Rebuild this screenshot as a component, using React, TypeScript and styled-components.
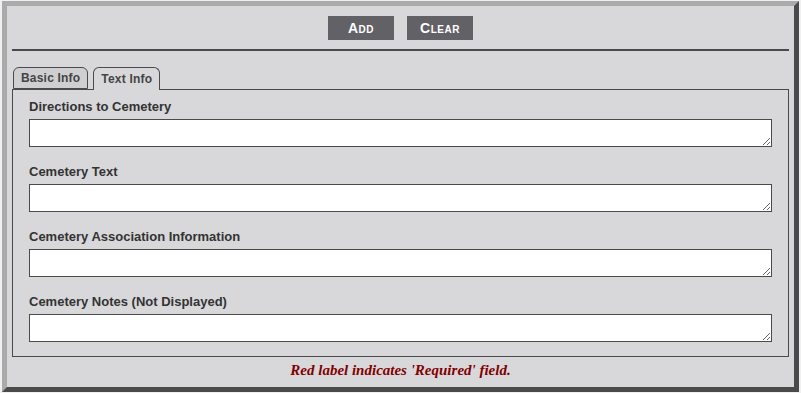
import styled, { createGlobalStyle } from "styled-components";

const GlobalStyle = createGlobalStyle`
  body {
    margin: 0;
    background: #f0f0f0;
    font-family: "Liberation Sans", Arial, sans-serif;
  }
`;

const Page = styled.div`
  padding: 1px 2px 0 2px;
`;

const Frame = styled.div`
  box-sizing: border-box;
  width: 797px;
  height: 391px;
  background: #d8d8da;
  border: 5px solid;
  border-color: #aaaaaa #4a4a4a #4a4a4a #aaaaaa;
  padding: 10px 5px 0 5px;
  display: flex;
  flex-direction: column;
`;

const Toolbar = styled.div`
  display: flex;
  justify-content: center;
  gap: 13px;
  padding-bottom: 9px;
  border-bottom: 2px solid #4a4a4a;
`;

const ActionButton = styled.button`
  width: 66px;
  height: 24px;
  border: none;
  background: #626165;
  color: #ffffff;
  font-family: "Liberation Sans", Arial, sans-serif;
  font-weight: bold;
  font-size: 14px;
  font-variant: small-caps;
  letter-spacing: 0.5px;
  padding: 0;
  cursor: pointer;
`;

const TabStrip = styled.div`
  display: flex;
  gap: 5px;
  margin-top: 16px;
  padding-left: 1px;
  position: relative;
  z-index: 1;
`;

const Tab = styled.div<{ $active?: boolean }>`
  box-sizing: border-box;
  height: ${(p) => (p.$active ? "23px" : "22px")};
  padding: 0 7px;
  display: flex;
  align-items: center;
  font-size: 12px;
  letter-spacing: 0.2px;
  font-weight: bold;
  color: #444;
  background: ${(p) => (p.$active ? "#d8d8da" : "#cfcfd1")};
  border: 1px solid #4a4a4a;
  border-bottom: ${(p) => (p.$active ? "none" : "1px solid #4a4a4a")};
  border-radius: 6px 6px 0 0;
  padding-bottom: ${(p) => (p.$active ? "1px" : "0")};
`;

const Panel = styled.div`
  box-sizing: border-box;
  height: 268px;
  margin-top: -1px;
  border: 1px solid #4a4a4a;
  padding: 9px 16px 0 16px;
  display: flex;
  flex-direction: column;
`;

const Field = styled.div`
  display: flex;
  flex-direction: column;
  gap: 4px;
  margin-bottom: 17px;
`;

const Label = styled.label`
  font-size: 13px;
  font-weight: bold;
  color: #333;
  line-height: 16px;
`;

const TextArea = styled.textarea`
  box-sizing: border-box;
  width: 100%;
  height: 28px;
  border: 1px solid #4a4a4a;
  background: #fff;
  margin: 0;
  padding: 2px 4px;
  font-family: "Liberation Sans", Arial, sans-serif;
  font-size: 13px;
`;

const Note = styled.div`
  text-align: center;
  margin-top: 5px;
  font-family: "Liberation Serif", "Times New Roman", serif;
  font-style: italic;
  font-weight: bold;
  font-size: 15px;
  color: #800000;
`;

const fields = [
  "Directions to Cemetery",
  "Cemetery Text",
  "Cemetery Association Information",
  "Cemetery Notes (Not Displayed)",
];

export default function App() {
  return (
    <Page>
      <GlobalStyle />
      <Frame>
        <Toolbar>
          <ActionButton>Add</ActionButton>
          <ActionButton>Clear</ActionButton>
        </Toolbar>
        <TabStrip>
          <Tab>Basic Info</Tab>
          <Tab $active>Text Info</Tab>
        </TabStrip>
        <Panel>
          {fields.map((f) => (
            <Field key={f}>
              <Label>{f}</Label>
              <TextArea />
            </Field>
          ))}
        </Panel>
        <Note>Red label indicates 'Required' field.</Note>
      </Frame>
    </Page>
  );
}
